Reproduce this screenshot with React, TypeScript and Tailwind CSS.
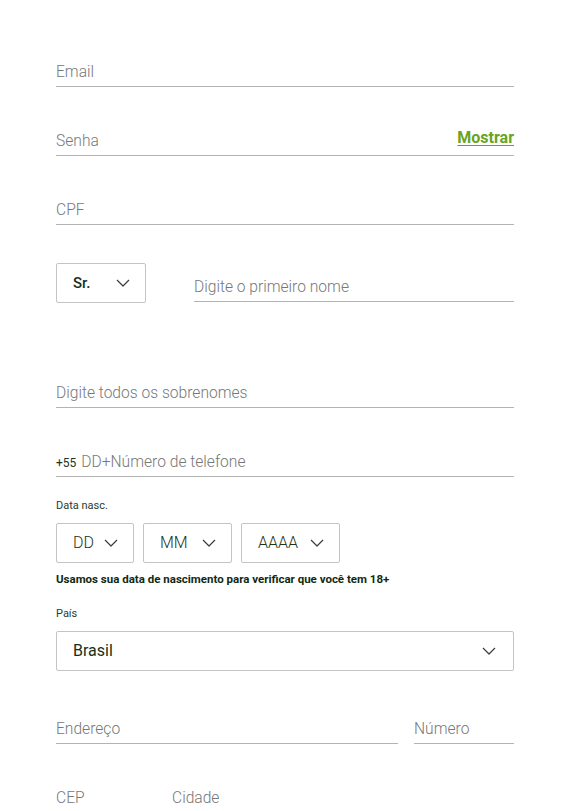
import React from "react";

const Chevron = () => (
  <svg width="14" height="8" viewBox="0 0 14 8" fill="none" className="shrink-0">
    <polyline points="1,1 7,7 13,1" stroke="#3a3a3a" strokeWidth="1.2" strokeLinejoin="round" />
  </svg>
);

const LineField = ({
  placeholder,
  className = "",
  prefix,
  right,
}: {
  placeholder: string;
  className?: string;
  prefix?: string;
  right?: React.ReactNode;
}) => (
  <div className={`flex h-[31px] items-end justify-between border-b border-[#b3b3b3] pb-[4px] ${className}`}>
    <div className="flex items-baseline">
      {prefix && <span className="mr-[5px] text-[12px] text-[#1d3320]">{prefix}</span>}
      <span className="text-[15.6px] font-light leading-[20px] text-[#777]">{placeholder}</span>
    </div>
    {right}
  </div>
);

const SelectBox = ({
  value,
  className = "",
  textClass = "",
}: {
  value: string;
  className?: string;
  textClass?: string;
}) => (
  <div
    className={`flex h-[40px] items-center justify-between rounded-[2px] border border-[#c4c4c4] pl-[16px] pr-[15px] ${className}`}
  >
    <span className={textClass}>{value}</span>
    <Chevron />
  </div>
);

export default function App() {
  return (
    <div className="min-h-screen bg-white" style={{ fontFamily: "Roboto, 'Liberation Sans', sans-serif" }}>
      <div className="ml-[56px] w-[458px] pt-[56px]">
        <LineField placeholder="Email" />
        <LineField
          placeholder="Senha"
          className="mt-[38px]"
          right={
            <span className="mb-[3px] text-[16px] font-bold leading-[20px] text-[#6aa31c] underline underline-offset-2">
              Mostrar
            </span>
          }
        />
        <LineField placeholder="CPF" className="mt-[38px]" />

        <div className="mt-[38px] flex items-start gap-[48px]">
          <SelectBox
            value="Sr."
            className="w-[90px]"
            textClass="text-[15px] font-medium text-[#173018]"
          />
          <LineField placeholder="Digite o primeiro nome" className="mt-[8px] flex-1" />
        </div>

        <LineField placeholder="Digite todos os sobrenomes" className="mt-[74px]" />
        <LineField placeholder="DD+Número de telefone" prefix="+55" className="mt-[38px]" />

        <div className="mt-[22px] text-[11px] leading-[14px] text-[#2b3a2b]">Data nasc.</div>
        <div className="mt-[10px] flex gap-[9px]">
          <SelectBox value="DD" className="w-[78px]" textClass="text-[16px] font-light text-[#1d3320]" />
          <SelectBox value="MM" className="w-[89px]" textClass="text-[16px] font-light text-[#1d3320]" />
          <SelectBox value="AAAA" className="w-[99px]" textClass="text-[16px] font-light text-[#1d3320]" />
        </div>
        <div className="mt-[9px] text-[11.5px] font-bold leading-[14px] text-[#102a12]">
          Usamos sua data de nascimento para verificar que você tem 18+
        </div>

        <div className="mt-[21px] text-[11px] leading-[14px] text-[#2b3a2b]">País</div>
        <SelectBox
          value="Brasil"
          className="mt-[10px] w-full pr-[17px]"
          textClass="text-[16px] text-[#173018]"
        />

        <div className="mt-[42px] flex gap-[16px]">
          <LineField placeholder="Endereço" className="flex-1" />
          <LineField placeholder="Número" className="w-[100px]" />
        </div>

        <div className="mt-[38px] flex gap-[16px]">
          <LineField placeholder="CEP" className="w-[100px]" />
          <LineField placeholder="Cidade" className="flex-1" />
        </div>
      </div>
    </div>
  );
}
